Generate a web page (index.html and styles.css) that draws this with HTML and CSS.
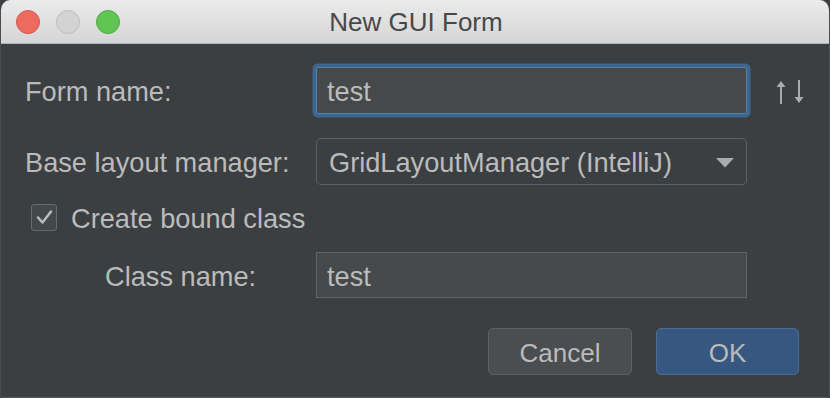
FILE: index.html
```html
<!DOCTYPE html>
<html>
<head>
<meta charset="utf-8">
<link rel="stylesheet" href="styles.css">
</head>
<body>
<div class="window">
  <div class="titlebar">
    <div class="lights">
      <span class="light red"></span>
      <span class="light gray"></span>
      <span class="light green"></span>
    </div>
    <div class="title">New GUI Form</div>
  </div>
  <div class="content">
    <div class="row row-form">
      <div class="label">Form name:</div>
      <div class="field focused"><span class="txt">test</span></div>
      <svg class="sort-icon" width="30" height="26" viewBox="0 0 30 26">
        <path d="M5 3 V25" stroke="#a9abad" stroke-width="2" fill="none"/>
        <path d="M0.5 8 L5 2 L9.5 8 Z" fill="#a9abad"/>
        <path d="M23 1 V23" stroke="#a9abad" stroke-width="2" fill="none"/>
        <path d="M18.5 18 L23 24 L27.5 18 Z" fill="#a9abad"/>
      </svg>
    </div>
    <div class="row row-combo">
      <div class="label">Base layout manager:</div>
      <div class="combo">
        <span class="txt">GridLayoutManager (IntelliJ)</span>
        <svg class="combo-arrow" width="18" height="10" viewBox="0 0 18 10">
          <path d="M0 0 H18 L9 9.5 Z" fill="#a9abad"/>
        </svg>
      </div>
    </div>
    <div class="row row-check">
      <span class="checkbox">
        <svg width="17" height="15" viewBox="0 0 17 15">
          <path d="M2 7.5 L6.5 12.5 L15 1.5" stroke="#bcbec0" stroke-width="2.4" fill="none" stroke-linecap="round" stroke-linejoin="round"/>
        </svg>
      </span>
      <span class="check-label">Create bound class</span>
    </div>
    <div class="row row-class">
      <div class="label indented">Class name:</div>
      <div class="field"><span class="txt">test</span></div>
    </div>
    <div class="buttons">
      <div class="btn cancel"><span class="txt">Cancel</span></div>
      <div class="btn ok"><span class="txt">OK</span></div>
    </div>
  </div>
</div>
</body>
</html>
```
FILE: styles.css
```css
html, body {
  margin: 0;
  padding: 0;
  background: #3c3f41;
}
body {
  width: 830px;
  height: 398px;
  overflow: hidden;
  font-family: "Liberation Sans", Arial, sans-serif;
}
.window {
  width: 830px;
  height: 398px;
  box-sizing: border-box;
  border-radius: 10px 10px 4px 4px;
  overflow: hidden;
  background: #3c3f41;
  border-left: 1px solid #4a4d4f;
  border-right: 1px solid #4a4d4f;
  border-bottom: 1px solid #55585a;
  display: flex;
  flex-direction: column;
}
.titlebar {
  height: 43px;
  flex: none;
  background: linear-gradient(#ebebeb, #d5d5d5);
  border-bottom: 1px solid #b4b4b4;
  position: relative;
  display: flex;
  align-items: center;
  justify-content: center;
  margin: 0 -1px;
}
.lights {
  position: absolute;
  left: 16px;
  top: 10px;
  display: flex;
  gap: 16px;
}
.light {
  width: 24px;
  height: 24px;
  box-sizing: border-box;
  border-radius: 50%;
  display: block;
}
.red { background: #ed6a5e; border: 1px solid #d4574c; }
.gray { background: #d3d3d3; border: 1px solid #bcbcbc; }
.green { background: #61c554; border: 1px solid #4fab43; }
.title {
  font-size: 26px;
  color: #484848;
  padding-left: 2px;
  margin-top: 2px;
}
.content {
  flex: 1;
  padding: 23px 0 0 24px;
  display: flex;
  flex-direction: column;
}
.row {
  display: flex;
  align-items: center;
}
.txt {
  padding-top: 3px;
}
.label {
  width: 291px;
  flex: none;
  font-size: 27.2px;
  color: #bbbbbb;
  padding-top: 3px;
  box-sizing: border-box;
}
.label.indented {
  padding-left: 80px;
}
.field {
  width: 431px;
  height: 46px;
  box-sizing: border-box;
  background: #45494a;
  border: 1px solid #646464;
  font-size: 27.2px;
  color: #bbbbbb;
  padding-left: 10px;
  display: flex;
  align-items: center;
}
.field.focused {
  height: 47px;
  border: 1px solid #5181ad;
  box-shadow: 0 0 0 3.5px #3d6590;
  border-radius: 2px;
}
.sort-icon {
  margin-left: 29px;
  margin-top: 2px;
}
.row-combo {
  margin-top: 24px;
}
.combo {
  width: 431px;
  height: 47px;
  box-sizing: border-box;
  border: 1.5px solid #5e6162;
  border-radius: 5px;
  background: #3c3f41;
  display: flex;
  align-items: center;
  justify-content: space-between;
  padding: 0 12px 0 12px;
  font-size: 27.2px;
  color: #bbbbbb;
}
.combo-arrow {
  margin-top: 2px;
}
.row-check {
  margin-top: 19px;
  padding-left: 6px;
  height: 27px;
}
.checkbox {
  width: 26px;
  height: 27px;
  box-sizing: border-box;
  border: 1.5px solid #696b6d;
  border-radius: 3px;
  background: #43494a;
  display: flex;
  align-items: center;
  justify-content: center;
}
.check-label {
  margin-left: 14px;
  font-size: 27.2px;
  color: #bbbbbb;
  padding-top: 3px;
}
.row-class {
  margin-top: 21px;
}
.row-class .field {
  height: 46px;
}
.buttons {
  margin-top: 30px;
  display: flex;
  justify-content: flex-end;
  gap: 24px;
  padding-right: 30px;
}
.btn {
  height: 47px;
  box-sizing: border-box;
  border-radius: 5px;
  font-size: 26px;
  color: #bbbbbb;
  display: flex;
  align-items: center;
  justify-content: center;
}
.cancel {
  width: 144px;
  background: #4b4e50;
  border: 1.5px solid #5e6162;
}
.ok {
  width: 143px;
  background: #365880;
  border: 1.5px solid #4b6d93;
}
```
